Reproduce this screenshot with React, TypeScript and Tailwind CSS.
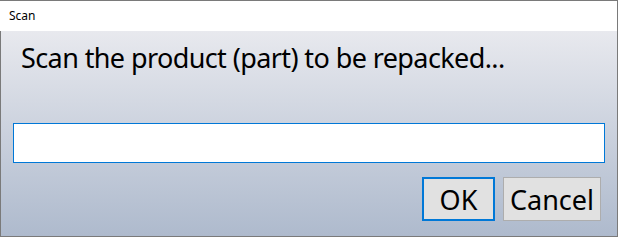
import React from "react";

export default function App() {
  return (
    <div
      className="w-[618px] h-[237px] flex flex-col bg-white"
      style={{ fontFamily: '"Noto Sans", "Open Sans", sans-serif' }}
    >
      <div className="h-[31px] shrink-0 bg-white border-t border-r border-[#7a7a7a] flex items-center pl-[9px] text-[12px] text-black leading-none">
        Scan
      </div>
      <div className="flex-1 flex flex-col border-l border-r border-b border-[#7a7a7a] bg-gradient-to-b from-[#e8e9ee] to-[#aebacd]">
        <div className="pl-[20px] pt-[10px] text-[27px] leading-[34px] tracking-[-0.6px] text-black">
          Scan the product (part) to be repacked...
        </div>
        <div className="mt-[48px] mx-[12px] h-[40px] bg-white border border-[#0078d7]"></div>
        <div className="mt-[14px] flex justify-end gap-[8px] pr-[16px]">
          <button className="w-[73px] h-[44px] bg-[#e1e1e1] border-2 border-[#0078d7] text-[27px] leading-none text-black">
            OK
          </button>
          <button className="w-[98px] h-[44px] bg-[#e1e1e1] border border-[#adadad] text-[27px] leading-none text-black">
            Cancel
          </button>
        </div>
      </div>
    </div>
  );
}
